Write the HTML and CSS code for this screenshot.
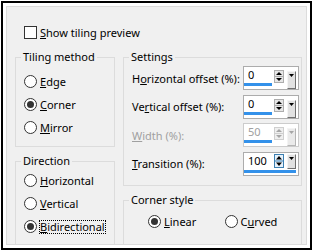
FILE: index.html
```html
<!DOCTYPE html>
<html>
<head>
<meta charset="utf-8">
<link rel="stylesheet" href="styles.css">
</head>
<body>
<div class="frame">
  <div class="panel">
    <div class="check-row"><span class="checkbox"></span><span><u>S</u>how tiling preview</span></div>
    <div class="cols">
      <div class="col left">
        <fieldset class="group tiling">
          <legend>Tiling method</legend>
          <div class="radio-row"><span class="radio"></span><span><u>E</u>dge</span></div>
          <div class="radio-row"><span class="radio on"></span><span><u>C</u>orner</span></div>
          <div class="radio-row"><span class="radio"></span><span><u>M</u>irror</span></div>
        </fieldset>
        <fieldset class="group direction">
          <legend>Direction</legend>
          <div class="radio-row"><span class="radio"></span><span><u>H</u>orizontal</span></div>
          <div class="radio-row"><span class="radio"></span><span><u>V</u>ertical</span></div>
          <div class="radio-row"><span class="radio on"></span><span class="focus"><u>B</u>idirectional</span></div>
        </fieldset>
      </div>
      <div class="col right">
        <fieldset class="group settings">
          <legend>Settings</legend>
          <div class="field-row">
            <span>H<u>o</u>rizontal offset (%):</span>
            <div class="spin">
              <span class="val">0</span><span class="bar"></span>
              <svg class="ud" width="10" height="13" viewBox="0 0 10 13"><rect x=".5" y=".5" width="9" height="12" fill="#e6e6e6" stroke="#adadad"/><line x1="1" y1="6.5" x2="9" y2="6.5" stroke="#adadad"/><path d="M5 2L8 5H2Z" fill="#000"/><path d="M2 8H8L5 11Z" fill="#000"/></svg>
              <span class="drop"><svg width="5" height="3" viewBox="0 0 5 3"><path d="M0 0H5L2.5 3Z" fill="#000"/></svg></span>
            </div>
          </div>
          <div class="field-row">
            <span>Ve<u>r</u>tical offset (%):</span>
            <div class="spin">
              <span class="val">0</span><span class="bar"></span>
              <svg class="ud" width="10" height="13" viewBox="0 0 10 13"><rect x=".5" y=".5" width="9" height="12" fill="#e6e6e6" stroke="#adadad"/><line x1="1" y1="6.5" x2="9" y2="6.5" stroke="#adadad"/><path d="M5 2L8 5H2Z" fill="#000"/><path d="M2 8H8L5 11Z" fill="#000"/></svg>
              <span class="drop"><svg width="5" height="3" viewBox="0 0 5 3"><path d="M0 0H5L2.5 3Z" fill="#000"/></svg></span>
            </div>
          </div>
          <div class="field-row disabled">
            <span><u>W</u>idth (%):</span>
            <div class="spin">
              <span class="val">50</span><span class="bar"></span>
              <svg class="ud" width="10" height="13" viewBox="0 0 10 13"><rect x=".5" y=".5" width="9" height="12" fill="#efefef" stroke="#cfcfcf"/><line x1="1" y1="6.5" x2="9" y2="6.5" stroke="#cfcfcf"/><path d="M5 2L8 5H2Z" fill="#a6a6a6"/><path d="M2 8H8L5 11Z" fill="#a6a6a6"/></svg>
              <span class="drop"><svg width="5" height="3" viewBox="0 0 5 3"><path d="M0 0H5L2.5 3Z" fill="#a6a6a6"/></svg></span>
            </div>
          </div>
          <div class="field-row">
            <span><u>T</u>ransition (%):</span>
            <div class="spin focused">
              <span class="val">100</span><span class="bar"></span>
              <svg class="ud" width="10" height="14" viewBox="0 0 10 14"><rect x=".5" y=".5" width="9" height="13" fill="#e5f1fb" stroke="#3c7fb1"/><line x1="1" y1="7" x2="9" y2="7" stroke="#3c7fb1"/><path d="M5 2L8 5.5H2Z" fill="#000"/><path d="M2 8.5H8L5 12Z" fill="#000"/></svg>
              <span class="drop"><svg width="5" height="3" viewBox="0 0 5 3"><path d="M0 0H5L2.5 3Z" fill="#000"/></svg></span>
            </div>
          </div>
        </fieldset>
        <fieldset class="group corner">
          <legend>Corner style</legend>
          <div class="corner-row">
            <div class="radio-row item"><span class="radio on"></span><span><u>L</u>inear</span></div>
            <div class="radio-row item"><span class="radio"></span><span>C<u>u</u>rved</span></div>
          </div>
        </fieldset>
      </div>
    </div>
  </div>
</div>
</body>
</html>
```
FILE: styles.css
```css
body {
  margin: 0;
  background: #fff;
  font-family: "Noto Sans", sans-serif;
  font-size: 11px;
  color: #000;
}
u { text-underline-offset: 1px; }
.frame {
  margin: 1px;
  width: 301px;
  height: 239px;
  border: 2px solid #000;
  padding: 3px;
}
.panel {
  box-sizing: border-box;
  width: 301px;
  height: 239px;
  border: 1px solid #dcdcdc;
  background: #f0f0f0;
  overflow: hidden;
  padding: 17px 0 0 8px;
}
.check-row {
  display: flex;
  align-items: center;
  height: 16px;
  margin-left: 9px;
  gap: 3px;
}
.checkbox {
  box-sizing: border-box;
  width: 13px;
  height: 13px;
  border: 1px solid #333;
  background: #fff;
}
.cols {
  display: flex;
  gap: 8px;
  margin-top: 9px;
}
.col {
  display: flex;
  flex-direction: column;
  gap: 6px;
}
.left { width: 100px; flex: none; }
.right { width: 179px; flex: none; }
.group {
  box-sizing: border-box;
  margin: 0;
  min-width: 0;
  border: 1px solid #dcdcdc;
  padding: 0 0 0 8px;
}
.group legend {
  padding: 0 2px;
  margin-left: -3px;
  line-height: 16px;
}
.tiling { height: 98px; padding-top: 5px; }
.direction { height: 100px; padding-top: 0; flex: none; }
.radio-row {
  display: flex;
  align-items: center;
  gap: 3px;
  height: 23px;
}
.radio {
  box-sizing: border-box;
  width: 13px;
  height: 13px;
  flex: none;
  border: 1px solid #333;
  border-radius: 50%;
  background: #fff;
  display: flex;
  align-items: center;
  justify-content: center;
}
.radio.on::after {
  content: "";
  width: 7px;
  height: 7px;
  border-radius: 50%;
  background: #333;
}
.focus {
  display: inline-block;
  line-height: 12px;
  outline: 1px dotted #000;
  outline-offset: 0;
}
.settings {
  height: 137px;
  padding: 1px 2px 0 8px;
  display: flex;
  flex-direction: column;
  gap: 4.5px;
}
.field-row {
  display: flex;
  align-items: center;
  justify-content: space-between;
  height: 24px;
}
.field-row.disabled > span:first-child { color: #a0a0a0; }
.spin {
  box-sizing: border-box;
  width: 56px;
  height: 24px;
  border: 1px solid #acacac;
  background: #fff;
  display: grid;
  grid-template-columns: 28px 12px 12px;
  grid-template-rows: 16px 3px;
  align-items: start;
}
.val {
  grid-area: 1 / 1;
  padding-left: 4px;
  line-height: 16px;
}
.bar {
  grid-area: 2 / 1;
  height: 3px;
  background: #3391ea;
}
.ud {
  grid-area: 1 / 2 / 3 / 3;
  margin: 3px 0 0 2px;
  display: block;
}
.drop {
  grid-area: 1 / 3 / 3 / 4;
  box-sizing: border-box;
  margin: 4px 0 0 3px;
  width: 9px;
  height: 18px;
  background: #e1e1e1;
  border-top: 1px solid #f4f4f4;
  border-left: 1px solid #f4f4f4;
  border-right: 1px solid #6f6f6f;
  border-bottom: 1px solid #6f6f6f;
  display: flex;
  justify-content: center;
  padding-top: 2px;
}
.drop svg { display: block; }
.disabled .spin { border-color: #cccccc; }
.disabled .val { color: #a0a0a0; }
.disabled .drop {
  background: #eaeaea;
  border-right-color: #b5b5b5;
  border-bottom-color: #b5b5b5;
}
.spin.focused .bar {
  grid-column: 1 / 4;
  margin-top: 1px;
}
.spin.focused .ud {
  grid-area: 1 / 2;
  margin-top: 1px;
}
.spin.focused .drop {
  grid-area: 1 / 3;
  margin-top: 1px;
  height: 15px;
}
.corner {
  height: 60px;
  padding: 2px 0 0 8px;
}
.corner-row { display: flex; margin-left: 16px; }
.corner-row .item { width: 80px; }
```
